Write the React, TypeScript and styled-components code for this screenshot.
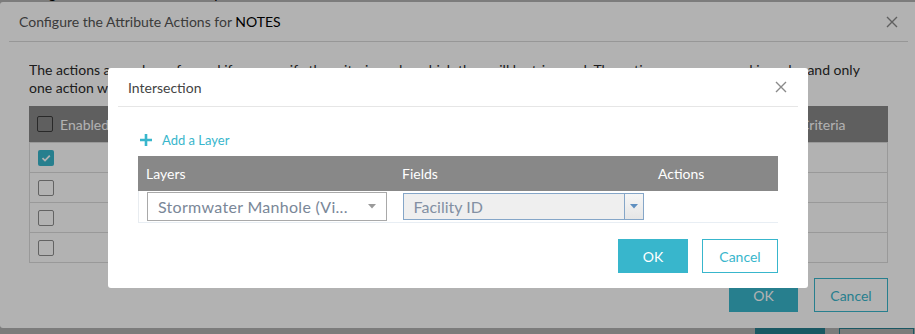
import styled, { createGlobalStyle } from "styled-components";

const TEAL = "#38b6cc";

const GlobalStyle = createGlobalStyle`
  body {
    margin: 0;
    overflow: hidden;
    background: #ffffff;
    font-family: Lato, "Open Sans", sans-serif;
    color: #333;
  }
`;

const CloseIcon = ({ size = 12, color = "#888" }: { size?: number; color?: string }) => (
  <svg width={size} height={size} viewBox="0 0 12 12">
    <path d="M1 1 L11 11 M11 1 L1 11" stroke={color} strokeWidth="1.4" fill="none" />
  </svg>
);

const CheckMark = () => (
  <svg width="12" height="12" viewBox="0 0 12 12">
    <path d="M2.5 6.2 L5 8.6 L9.8 3.6" stroke="#fff" strokeWidth="1.8" fill="none" />
  </svg>
);

const Caret = ({ color }: { color: string }) => (
  <svg width="8" height="5" viewBox="0 0 8 5">
    <path d="M0 0 H8 L4 4.5 Z" fill={color} />
  </svg>
);

const PlusIcon = () => (
  <svg width="12" height="12" viewBox="0 0 12 12">
    <path d="M6 0 V12 M0 6 H12" stroke={TEAL} strokeWidth="2.6" fill="none" />
  </svg>
);

const rows = [true, false, false, false];

export default function App() {
  return (
    <>
      <GlobalStyle />
      <Page>
        <TopNote>Configure attribute name for Map Notes</TopNote>
        <PageFooter>
          <PrimaryButton $width={70}>OK</PrimaryButton>
          <OutlineButton $width={75}>Cancel</OutlineButton>
        </PageFooter>
      </Page>
      <Overlay />

      <OuterDialog>
        <OuterHeader>
          <OuterTitle>
            Configure the Attribute Actions for <strong>NOTES</strong>
          </OuterTitle>
          <CloseButton>
            <CloseIcon color="#888" />
          </CloseButton>
        </OuterHeader>
        <OuterBody>
          <Intro>
            The actions are only performed if you specify the criteria under which they will be triggered. The actions are processed in order and only
            <br />
            one action will be applied to each field when an edit is saved.
          </Intro>
          <ActionsTable>
            <ActionsHead>
              <HeadCell $width={120}>
                <Box $dark />
                Enabled
              </HeadCell>
              <HeadCell $grow>Action</HeadCell>
              <HeadCell $width={88}>Criteria</HeadCell>
            </ActionsHead>
            {rows.map((on, i) => (
              <ActionsRow key={i}>
                {on ? (
                  <CheckedBox>
                    <CheckMark />
                  </CheckedBox>
                ) : (
                  <Box />
                )}
              </ActionsRow>
            ))}
          </ActionsTable>
          <Footer>
            <PrimaryButton $width={69}>OK</PrimaryButton>
            <OutlineButton $width={74}>Cancel</OutlineButton>
          </Footer>
        </OuterBody>
      </OuterDialog>

      <Overlay />

      <InnerDialog>
        <InnerHeader>
          <InnerTitle>Intersection</InnerTitle>
          <CloseButton>
            <CloseIcon color="#8a8a8a" />
          </CloseButton>
        </InnerHeader>
        <InnerBody>
          <AddLink>
            <PlusIcon />
            Add a Layer
          </AddLink>
          <LayerTable>
            <LayerHead>
              <LayerHeadCell $width={256}>Layers</LayerHeadCell>
              <LayerHeadCell $width={256}>Fields</LayerHeadCell>
              <LayerHeadCell $width={128}>Actions</LayerHeadCell>
            </LayerHead>
            <LayerRow>
              <LayerCell $width={256}>
                <LayerSelect>
                  <span>Stormwater Manhole (Vi...</span>
                  <Caret color="#9a9a9a" />
                </LayerSelect>
              </LayerCell>
              <LayerCell $width={256}>
                <FieldSelect>
                  <span>Facility ID</span>
                  <FieldArrow>
                    <Caret color="#5f8fc0" />
                  </FieldArrow>
                </FieldSelect>
              </LayerCell>
              <LayerCell $width={128} />
            </LayerRow>
          </LayerTable>
          <Footer $inner>
            <PrimaryButton $width={70}>OK</PrimaryButton>
            <OutlineButton $width={76}>Cancel</OutlineButton>
          </Footer>
        </InnerBody>
      </InnerDialog>
    </>
  );
}

const Page = styled.div`
  height: 334px;
  overflow: hidden;
  display: flex;
  flex-direction: column;
`;

const TopNote = styled.div`
  margin: -14px 0 0 16px;
  font-size: 14px;
  line-height: 16px;
  color: #000;
`;

const PageFooter = styled.div`
  margin-top: auto;
  margin-bottom: -28px;
  padding-right: 1px;
  display: flex;
  justify-content: flex-end;
  gap: 14px;
`;

const Overlay = styled.div`
  position: fixed;
  inset: 0;
  background: rgba(0, 0, 0, 0.3);
`;

const OuterDialog = styled.div`
  position: absolute;
  left: 0;
  top: 2px;
  width: 918px;
  height: 326px;
  background: #fff;
  border-radius: 3px;
  display: flex;
  flex-direction: column;
`;

const OuterHeader = styled.div`
  height: 39px;
  margin: 0 10px 0 9px;
  padding: 0 10px;
  border-bottom: 1px solid #d9d9d9;
  display: flex;
  align-items: center;
  justify-content: space-between;
`;

const OuterTitle = styled.div`
  font-size: 14px;
  color: #555;

  strong {
    font-weight: 400;
    color: #000;
  }
`;

const CloseButton = styled.div`
  width: 12px;
  height: 12px;
  display: flex;
`;

const OuterBody = styled.div`
  padding: 19px 30px 0 29px;
`;

const Intro = styled.p`
  margin: 0;
  font-size: 14px;
  line-height: 18px;
  color: #2a2a2a;
  white-space: nowrap;
  overflow: hidden;
`;

const ActionsTable = styled.div`
  margin-top: 9px;
  border: 1px solid #dcdcdc;
  border-top: none;
`;

const ActionsHead = styled.div`
  height: 36px;
  margin: 0 -1px;
  background: #888;
  color: #fff;
  display: flex;
  align-items: center;
  font-size: 14px;
`;

const HeadCell = styled.div<{ $width?: number; $grow?: boolean }>`
  ${(p) => (p.$width ? `width: ${p.$width}px;` : "")}
  ${(p) => (p.$grow ? "flex: 1;" : "")}
  display: flex;
  align-items: center;
  gap: 7px;
  padding-left: 8px;
`;

const ActionsRow = styled.div`
  height: 30px;
  border-top: 1px solid #dcdcdc;
  display: flex;
  align-items: center;
  padding-left: 8px;
  box-sizing: border-box;

  &:first-of-type {
    border-top: none;
  }
`;

const Box = styled.span<{ $dark?: boolean }>`
  width: 14px;
  height: 14px;
  border: 1px solid ${(p) => (p.$dark ? "#3c3c3c" : "#8f8f8f")};
  border-radius: 2px;
  background: transparent;
  flex-shrink: 0;
`;

const CheckedBox = styled.span`
  width: 16px;
  height: 16px;
  border-radius: 2px;
  background: ${TEAL};
  display: flex;
  align-items: center;
  justify-content: center;
`;

const Footer = styled.div<{ $inner?: boolean }>`
  margin-top: ${(p) => (p.$inner ? 16 : 15)}px;
  display: flex;
  justify-content: flex-end;
  gap: ${(p) => (p.$inner ? 14 : 16)}px;
`;

const PrimaryButton = styled.button<{ $width: number }>`
  width: ${(p) => p.$width}px;
  height: 34px;
  border: none;
  background: ${TEAL};
  color: #fff;
  font-family: inherit;
  font-size: 14px;
  padding: 0;
`;

const OutlineButton = styled.button<{ $width: number }>`
  width: ${(p) => p.$width}px;
  height: 34px;
  border: 1px solid ${TEAL};
  background: #fff;
  color: ${TEAL};
  font-family: inherit;
  font-size: 14px;
  padding: 0;
`;

const InnerDialog = styled.div`
  position: absolute;
  left: 108px;
  top: 68px;
  width: 700px;
  height: 220px;
  background: #fff;
  border-radius: 3px;
  display: flex;
  flex-direction: column;
`;

const InnerHeader = styled.div`
  height: 38px;
  margin: 0 10px;
  padding: 0 11px 0 10px;
  border-bottom: 1px solid #e6e6e6;
  display: flex;
  align-items: center;
  justify-content: space-between;
`;

const InnerTitle = styled.div`
  font-size: 14px;
  color: #444;
`;

const InnerBody = styled.div`
  padding: 24px 30px 0;
`;

const AddLink = styled.div`
  display: flex;
  align-items: center;
  gap: 10px;
  padding-left: 2px;
  height: 18px;
  font-size: 13px;
  color: ${TEAL};
`;

const LayerTable = styled.div`
  margin-top: 7px;
  border-left: 1px solid #e8ecf0;
  border-bottom: 1px solid #e8eef4;
`;

const LayerHead = styled.div`
  height: 35px;
  margin-left: -1px;
  background: #888;
  color: #fff;
  display: flex;
  align-items: center;
  font-size: 14px;
`;

const LayerHeadCell = styled.div<{ $width: number }>`
  width: ${(p) => p.$width}px;
  padding-left: 8px;
  box-sizing: border-box;
`;

const LayerRow = styled.div`
  height: 31px;
  display: flex;
  align-items: center;
`;

const LayerCell = styled.div<{ $width: number }>`
  width: ${(p) => p.$width}px;
  padding-left: 8px;
  box-sizing: border-box;
  display: flex;
  align-items: center;
`;

const LayerSelect = styled.div`
  width: 240px;
  height: 29px;
  box-sizing: border-box;
  border: 1px solid #a9a9a9;
  background: #fff;
  display: flex;
  align-items: center;
  justify-content: space-between;
  padding: 0 10px;
  font-size: 16px;
  letter-spacing: 0.3px;
  color: #7a8798;
`;

const FieldSelect = styled.div`
  width: 241px;
  height: 27px;
  box-sizing: border-box;
  border: 1px solid #85a6c8;
  background: #efefef;
  display: flex;
  align-items: center;
  justify-content: space-between;
  padding-left: 10px;
  font-size: 16px;
  color: #8390a3;
`;

const FieldArrow = styled.div`
  width: 18px;
  height: 100%;
  border-left: 1px solid #85a6c8;
  background: linear-gradient(#f6f6f6, #e6e6e6);
  display: flex;
  align-items: center;
  justify-content: center;
`;
